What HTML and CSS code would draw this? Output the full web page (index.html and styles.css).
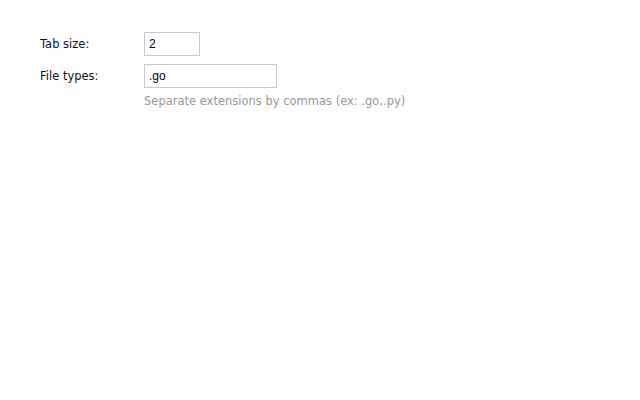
FILE: index.html
```html
<!DOCTYPE html>
<html>
<head>
<meta charset="utf-8">
<link rel="stylesheet" href="styles.css">
</head>
<body>
<form class="options">
  <div class="row">
    <label class="label" for="tabsize">Tab size:</label>
    <input class="field field-short" id="tabsize" type="text" value="2">
  </div>
  <div class="row">
    <label class="label" for="filetypes">File types:</label>
    <div class="control">
      <input class="field field-long" id="filetypes" type="text" value=".go">
      <div class="hint">Separate extensions by commas (ex: .go,.py)</div>
    </div>
  </div>
</form>
</body>
</html>
```

FILE: styles.css
```css
html, body {
  height: 100%;
}
body {
  margin: 0;
  background: linear-gradient(to right, #ffffff 48px, #fefefe 48px, #fefefe 416px, #ffffff 416px);
  font-family: "DejaVu Sans", "Liberation Sans", sans-serif;
  font-size: 11.5px;
  color: #111;
}
.options {
  display: flex;
  flex-direction: column;
  gap: 8px;
  padding: 32px 0 0 40px;
}
.row {
  display: grid;
  grid-template-columns: 104px auto;
  align-items: start;
}
.label {
  line-height: 24px;
  color: #111;
}
.control {
  display: flex;
  flex-direction: column;
  align-items: flex-start;
}
.field {
  box-sizing: border-box;
  height: 24px;
  margin: 0;
  padding: 0 4px;
  border: 1px solid #c9c9c9;
  border-radius: 0;
  background: #fff;
  font-family: "Liberation Sans", Arial, sans-serif;
  font-size: 12px;
  color: #000;
  outline: none;
}
.field-short {
  width: 56px;
}
.field-long {
  width: 133px;
}
.hint {
  margin-top: 6px;
  line-height: 15px;
  color: #999;
  white-space: nowrap;
}
```
